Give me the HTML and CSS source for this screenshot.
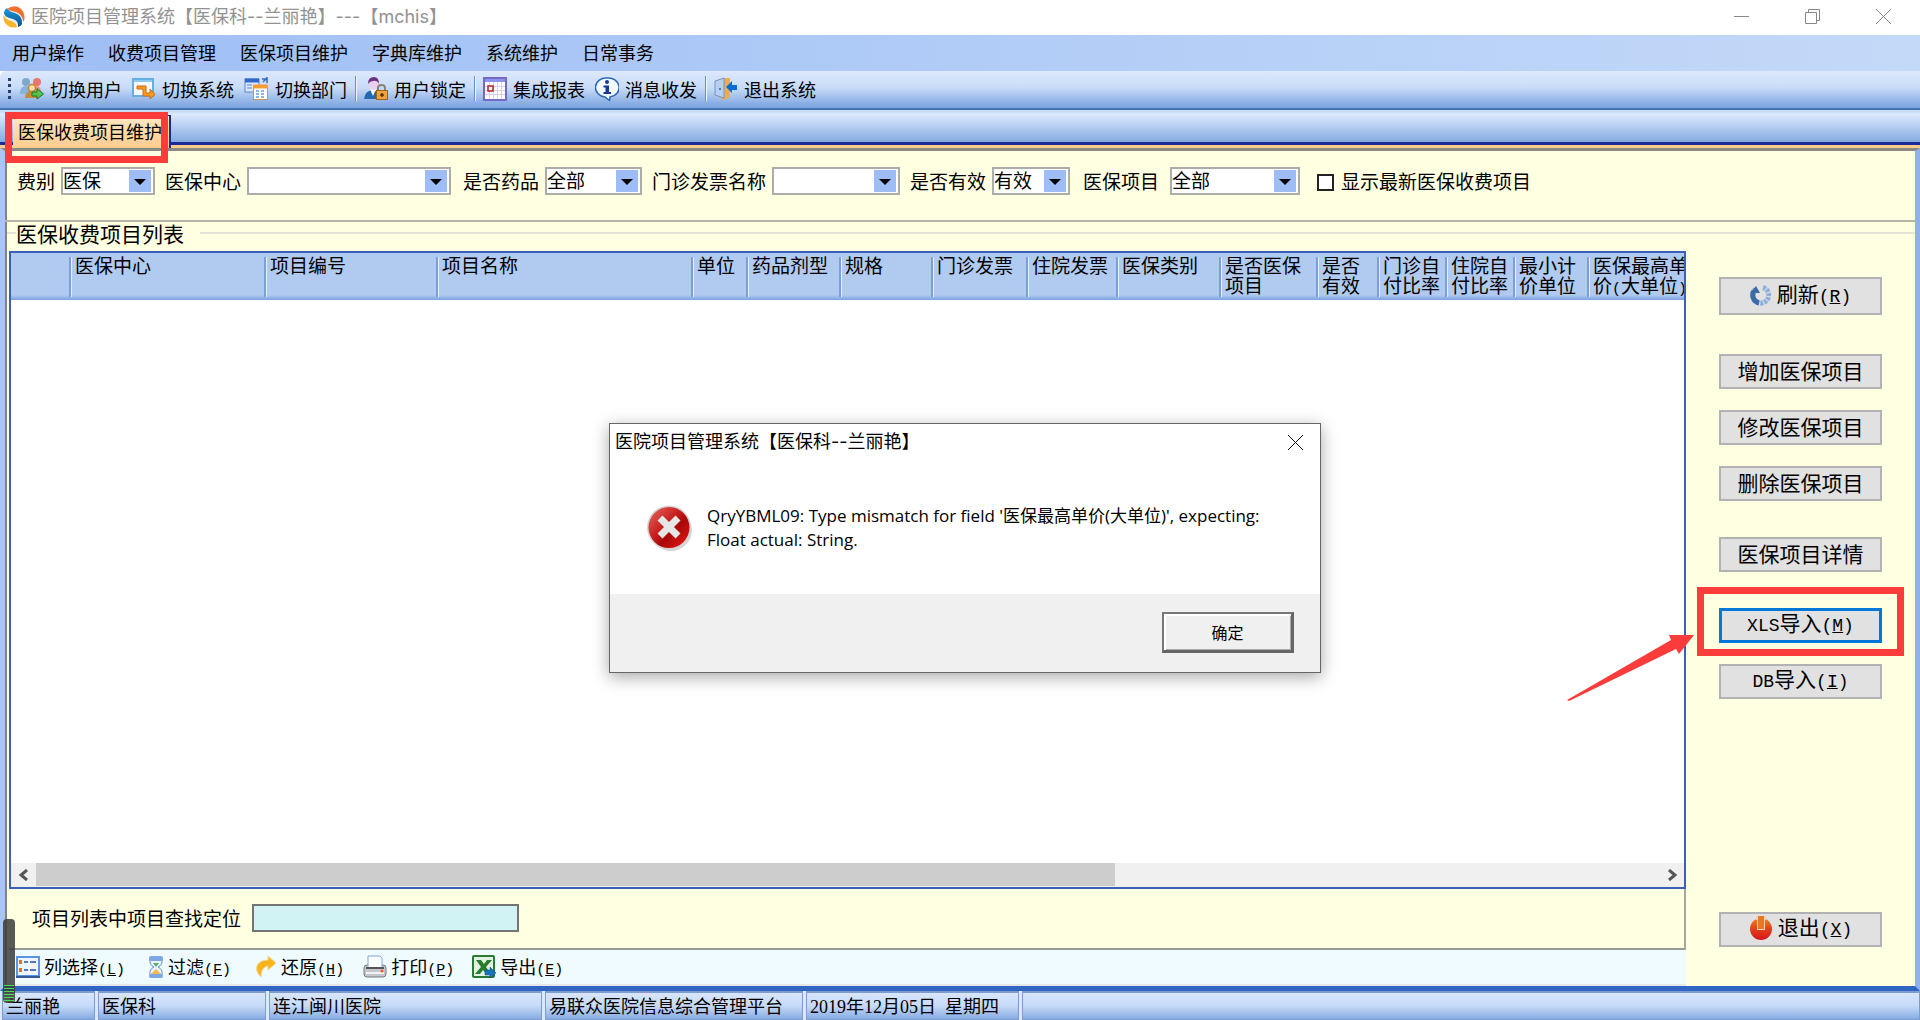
FILE: index.html
```html
<!DOCTYPE html>
<html lang="zh-CN">
<head>
<meta charset="utf-8">
<title>医院项目管理系统</title>
<link rel="stylesheet" href="styles.css">
</head>
<body>
<header class="titlebar">
  <svg class="logo" viewBox="0 0 22 22" width="22" height="22"><defs><linearGradient id="lb" x1="0" y1="0" x2="0" y2="1"><stop offset="0" stop-color="#1d9be0"/><stop offset="1" stop-color="#0b4d85"/></linearGradient></defs><circle cx="11" cy="11" r="10" fill="#e8eff4"/><path d="M4 3Q11-2 17 2Q22 6 21.500 13L20 16Q20 9 13 6Q7 5 4 3Z" fill="#f0702c"/><path d="M4 2Q6 6 12 7Q20 10 19 18Q18 20 15 21Q16 15 10 13Q0 11 1 6Q2 3 4 2Z" fill="url(#lb)"/><path d="M.5 9Q3 14 8 15Q14 17 14 21Q7 23 2 17Q0 13 .5 9Z" fill="#fbb42c"/></svg>
  <h1 class="title">医院项目管理系统【医保科--兰丽艳】---【mchis】</h1>
  <div class="winctl">
    <button class="wc" aria-label="最小化"><svg width="15" height="15"><path d="M0 7.500H15" stroke="#888" fill="none"/></svg></button>
    <button class="wc" aria-label="还原"><svg width="15" height="15"><path d="M.5 3.500H11.500V14.500H.5ZM3.500 3.500V.5H14.500V11.500H11.500" stroke="#888" fill="none"/></svg></button>
    <button class="wc" aria-label="关闭"><svg width="15" height="15"><path d="M0 0L15 15M15 0L0 15" stroke="#888" fill="none"/></svg></button>
  </div>
</header>
<nav class="menu">
  <button>用户操作</button><button>收费项目管理</button><button>医保项目维护</button><button>字典库维护</button><button>系统维护</button><button>日常事务</button>
</nav>
<div class="toolbar">
  <span class="grip"></span>
  <button><svg width="24" height="24" viewBox="0 0 24 24"><circle cx="6" cy="5" r="4" fill="#7fa8cf"/><path d="M0 17Q0 9 6 9L12 10V17Z" fill="#88b3da"/><circle cx="17" cy="5" r="4" fill="#e8776c"/><path d="M11 10Q20 6 22 16H12Z" fill="#f0948a"/><path d="M5 21Q5 14 12 14T18 21Z" fill="#c98a3a"/><circle cx="12" cy="11" r="3.500" fill="#ffe0b0" stroke="#c9821c" stroke-width="1.500"/><path d="M12 15H17V11.500L23.500 17L17 22V19H12Z" fill="#5cc04d" stroke="#157a2a"/></svg>切换用户</button>
  <button><svg width="24" height="24" viewBox="0 0 24 24"><rect x="1" y="2" width="20" height="17" fill="#f5f9ff" stroke="#64b0e6" stroke-width="2"/><path d="M2 4H20" stroke="#8ccaf0" stroke-width="2"/><path d="M5 9H14V16H18V12L23 17.500L18 22V19H11V12H5Z" fill="#f89a1c" stroke="#cf6b10"/></svg>切换系统</button>
  <button><svg width="25" height="24" viewBox="0 0 25 24"><rect x="1" y="2" width="14" height="13" fill="#dce9fb" stroke="#5a82d0"/><path d="M1 3.500H15" stroke="#3468c8" stroke-width="4"/><path d="M3 8H8M3 11H8" stroke="#5a82d0"/><path d="M18 2H23M23 0V6M19 5L23 1" stroke="#3468c8" stroke-width="1.500"/><rect x="9.500" y="8.500" width="14" height="14" fill="#fff" stroke="#cf934c"/><path d="M9 9.500H24" stroke="#f59c32" stroke-width="4"/><path d="M12 14H15M17 14H20M12 17H15M17 17H20M12 20H15M17 20H20" stroke="#8ab7df" stroke-width="2"/></svg>切换部门</button>
  <span class="sep"></span>
  <button><svg width="24" height="24" viewBox="0 0 24 24"><path d="M0 22Q1 14 8 13Q15 14 16 22Z" fill="#2369ad"/><path d="M6 12L9 19L12 12Z" fill="#fff"/><ellipse cx="9.500" cy="7" rx="4.500" ry="6" fill="#ead0ee"/><path d="M4 7Q4 0 10 0Q15 0 15 7Q13 3 9 4Q6 4 4 7Z" fill="#6d327f"/><path d="M14 14V11Q14 8 17.500 8T21 11V14" fill="none" stroke="#8b8176" stroke-width="2"/><rect x="12.500" y="13.500" width="11" height="9" fill="#eca43a" stroke="#a36313"/><path d="M16 18H20M18 16V20" stroke="#4e3410" stroke-width="1.500"/></svg>用户锁定</button>
  <span class="sep"></span>
  <button><svg width="24" height="24" viewBox="0 0 24 24"><rect x="1" y="1" width="22" height="22" fill="#fff" stroke="#7569c7" stroke-width="2"/><path d="M2 3.500H22" stroke="#8d93e8" stroke-width="3"/><path d="M6.500 5V22M10.500 5V22M14.500 5V22M18.500 5V22M2 9.500H22M2 13.500H22M2 17.500H22" stroke="#d2cff3"/><rect x="5" y="9" width="5" height="5" fill="#fff" stroke="#b91c1c" stroke-width="1.500"/></svg>集成报表</button>
  <button><svg width="24" height="24" viewBox="0 0 24 24"><path d="M12 1A10.500 9.500 0 0 1 15 20L14.500 23.500L10 20A10.500 9.500 0 0 1 12 1Z" fill="#f4faff" stroke="#2869b5" stroke-width="1.500"/><circle cx="12" cy="5" r="2" fill="#123a9b"/><path d="M8.500 8.500H14V15H16V17H8.500V15H10.500V10.500H8.500Z" fill="#123a9b"/></svg>消息收发</button>
  <span class="sep"></span>
  <button><svg width="24" height="24" viewBox="0 0 24 24"><path d="M5 4L11 1H16V20L10 23L5 20Z" fill="#e8ae52"/><path d="M1 4L10 1V21L1 18Z" fill="#b5d0f0" stroke="#7f90c4"/><circle cx="6" cy="12" r="1" fill="#405799"/><path d="M12 10L18 4V8H23V13H18V16Z" fill="#0c6ad4"/></svg>退出系统</button>
</div>
<div class="tabs" role="tablist">
  <div class="tabwrap"><button class="tab" role="tab" aria-selected="true">医保收费项目维护</button><span class="mark mark-tab"></span></div>
</div>
<main class="work">
  <form class="filters">
    <label for="f1">费别</label><span class="combo c1"><select id="f1"><option>医保</option></select></span>
    <label for="f2">医保中心</label><span class="combo c2"><select id="f2"><option></option></select></span>
    <label for="f3">是否药品</label><span class="combo c3"><select id="f3"><option>全部</option></select></span>
    <label for="f4">门诊发票名称</label><span class="combo c4"><select id="f4"><option></option></select></span>
    <label for="f5">是否有效</label><span class="combo c5"><select id="f5"><option>有效</option></select></span>
    <label for="f6">医保项目</label><span class="combo c6"><select id="f6"><option>全部</option></select></span>
    <input class="check" type="checkbox" id="f7"><label for="f7">显示最新医保收费项目</label>
  </form>
  <h2 class="legend">医保收费项目列表</h2>
  <div class="content">
    <section class="left">
      <div class="grid">
        <div class="gridbody">
          <table>
            <colgroup><col class="w0"><col class="w1"><col class="w2"><col class="w3"><col class="w4"><col class="w5"><col class="w6"><col class="w7"><col class="w8"><col class="w9"><col class="w10"><col class="w11"><col class="w12"><col class="w13"><col class="w14"><col class="w15"></colgroup>
            <thead><tr><th></th><th>医保中心</th><th>项目编号</th><th>项目名称</th><th>单位</th><th>药品剂型</th><th>规格</th><th>门诊发票</th><th>住院发票</th><th>医保类别</th><th>是否医保<br>项目</th><th>是否<br>有效</th><th>门诊自<br>付比率</th><th>住院自<br>付比率</th><th>最小计<br>价单位</th><th>医保最高单<br>价<span class="half">(</span>大单位<span class="half">)</span></th></tr></thead>
          </table>
        </div>
        <div class="hscroll">
          <button aria-label="向左"><svg width="10" height="12"><path d="M8 1L2 6L8 11" fill="none" stroke="#555" stroke-width="3"/></svg></button>
          <div class="track"><div class="thumb"></div></div>
          <button aria-label="向右"><svg width="10" height="12"><path d="M2 1L8 6L2 11" fill="none" stroke="#555" stroke-width="3"/></svg></button>
        </div>
      </div>
      <div class="search"><label for="q">项目列表中项目查找定位</label><input id="q" type="text"></div>
      <div class="actions">
        <button class="a1"><svg width="24" height="24" viewBox="0 0 24 24"><rect x="1" y="2" width="22" height="19" fill="#eef5ff" stroke="#5b93e8" stroke-width="2"/><path d="M0 22H24" stroke="#365b96" stroke-width="2"/><path d="M3 7H6M3 15H6" stroke="#f26b1c" stroke-width="4"/><path d="M8 7H12M14 7H20M8 15H12M14 15H20" stroke="#5577c4" stroke-width="2"/></svg><span>列选择<span class="half">(<u>L</u>)</span></span></button>
        <button class="a2"><svg width="16" height="24" viewBox="0 0 16 24"><path d="M2 4H14Q15 10 10 12Q15 14 14 20H2Q1 14 6 12Q1 10 2 4Z" fill="#e9f1fc" stroke="#6b93d2"/><rect x="1" y="1" width="14" height="5" rx="2" fill="#7ea7e4"/><rect x="1" y="19" width="14" height="4" rx="2" fill="#7ea7e4"/><path d="M5 8H11L8 12Z" fill="#4cb36a"/><path d="M8 14L13 19H3Z" fill="#f5b84c"/></svg><span>过滤<span class="half">(<u>F</u>)</span></span></button>
        <button class="a3"><svg width="22" height="24" viewBox="0 0 22 24"><path d="M13 1L21 8L13 15V11Q6 12 6 22Q-1 15 3 9Q6 5 13 5Z" fill="#f9b41d" stroke="#f5d78d"/></svg><span>还原<span class="half">(<u>H</u>)</span></span></button>
        <button class="a4"><svg width="24" height="24" viewBox="0 0 24 24"><rect x="1" y="10" width="22" height="12" rx="3" fill="#c5c7cd" stroke="#767982"/><path d="M5 1H17L19 3V13H5Z" fill="#fafdff" stroke="#85a6dc"/><path d="M3 13H21" stroke="#555" stroke-width="2"/><path d="M3 18H21" stroke="#f2f2f2" stroke-width="2"/><circle cx="19" cy="16" r="1.500" fill="#f45b24"/></svg><span>打印<span class="half">(<u>P</u>)</span></span></button>
        <button class="a5"><svg width="24" height="24" viewBox="0 0 24 24"><rect x="1" y="1" width="21" height="21" rx="1" fill="#e2f3e3" stroke="#2a7a36" stroke-width="2"/><path d="M4 5H9L12 9L15 5H20L14 12L19 19H14L11 15L8 19H3L9 12Z" fill="#297b2e"/><path d="M13 15H18V12L24 18L18 23V20H13Z" fill="#1973b8" stroke="#0e4f80" stroke-width=".5"/></svg><span>导出<span class="half">(<u>E</u>)</span></span></button>
      </div>
    </section>
    <aside class="side">
      <button class="btn tall"><svg width="22" height="22" viewBox="0 0 22 22"><path d="M13 3.500A8 8 0 1 1 5 5.500" fill="none" stroke="#8fb0dc" stroke-width="5" stroke-dasharray="3 1"/><path d="M9 19A8 8 0 0 1 4 7" fill="none" stroke="#3a6ba5" stroke-width="5"/><path d="M0 9L6 2L10 9Z" fill="#3a6ba5"/></svg><span>刷新<span class="key">(<u>R</u>)</span></span></button>
      <div class="group"><button class="btn">增加医保项目</button><button class="btn">修改医保项目</button><button class="btn">删除医保项目</button></div>
      <button class="btn">医保项目详情</button>
      <div class="group">
        <div class="target"><button class="btn focus"><span><span class="key">XLS</span>导入<span class="key">(<u>M</u>)</span></span></button><span class="mark mark-btn"></span>
          <svg class="arrow" width="128" height="68" viewBox="0 0 128 68"><path d="M0 66L104 6L102 1L127 1L112 20L109 15L2 67Z" fill="#fc3b3b"/></svg></div>
        <button class="btn"><span><span class="key">DB</span>导入<span class="key">(<u>I</u>)</span></span></button>
      </div>
      <button class="btn exit"><svg width="24" height="24" viewBox="0 0 24 24"><defs><linearGradient id="pw" x1="0" y1="0" x2="0" y2="1"><stop offset="0" stop-color="#ee8424"/><stop offset=".5" stop-color="#e2401b"/><stop offset="1" stop-color="#d6151c"/></linearGradient></defs><circle cx="12" cy="13" r="11" fill="url(#pw)"/><path d="M7 0H17V4H16V14H8V4H7Z" fill="#f3cdbd"/><rect x="9" y="0" width="6" height="13" fill="#e8791f"/></svg><span>退出<span class="key">(<u>X</u>)</span></span></button>
    </aside>
  </div>
</main>
<footer class="status">
  <span class="s1">兰丽艳</span><span class="s2">医保科</span><span class="s3">连江闽川医院</span><span class="s4">易联众医院信息综合管理平台</span><span class="s5"><span class="date">2019</span>年<span class="date">12</span>月<span class="date">05</span>日<span class="half">&nbsp;</span>星期四</span><span class="s6"></span>
</footer>
<div class="meter"></div>
<section class="dialog" role="dialog" aria-labelledby="dt">
  <header><h2 id="dt">医院项目管理系统【医保科--兰丽艳】</h2><button class="wc" aria-label="关闭"><svg width="15" height="15"><path d="M0 0L15 15M15 0L0 15" stroke="#111" fill="none"/></svg></button></header>
  <div class="msg">
    <svg width="46" height="48" viewBox="0 0 46 48"><defs><linearGradient id="er" x1="0" y1="0" x2="1" y2="1"><stop offset="0" stop-color="#e86a62"/><stop offset=".45" stop-color="#c41a1a"/><stop offset=".6" stop-color="#a80808"/><stop offset="1" stop-color="#ee1a14"/></linearGradient></defs><ellipse cx="24" cy="26" rx="21" ry="21" fill="#999" opacity=".4"/><circle cx="22" cy="23.500" r="22" fill="#d6d2d2"/><circle cx="22" cy="23.500" r="20.500" fill="url(#er)"/><path d="M13 14L31 32M31 14L13 32" stroke="#e6e6e6" stroke-width="7"/></svg>
    <p>QryYBML09: Type mismatch for field '医保最高单价(大单位)', expecting:<br>Float actual: String.</p>
  </div>
  <div class="foot"><button class="ok">确定</button></div>
</section>
</body>
</html>
```
FILE: styles.css
```css
* { box-sizing: border-box; }
body {
  margin: 0; min-height: 100vh; display: flex; flex-direction: column; position: relative;
  background: #fff; color: #000; overflow-x: hidden;
  font: 18px/24px "Noto Sans CJK SC", sans-serif;
}
button { font: inherit; color: inherit; border: 0; background: none; padding: 0; display: flex; align-items: center; white-space: nowrap; }
svg { flex: none; display: block; }
h1, h2, p { margin: 0; font-weight: 400; }
.half { font: 15px/20px "Liberation Mono", monospace; }
.key { font: 18px/24px "Liberation Mono", monospace; }
.date { font: 18px/20px "Liberation Serif", serif; }

.titlebar { height: 35px; display: flex; align-items: center; padding: 0 22px 2px 3px; gap: 6px; }
.title { font-size: 18px; color: #929292; font-family: Inter, "Noto Sans CJK SC", sans-serif; }
.winctl { margin-left: auto; display: flex; gap: 42px; }
.wc { width: 29px; height: 29px; justify-content: center; }

.menu { height: 36px; display: flex; align-items: center; gap: 24px; padding: 0 12px 3px; background: linear-gradient(90deg, #9ebef5, #c3d9f8); }
.toolbar {
  height: 39px; display: flex; align-items: center; padding: 0 8px 2px; gap: 10px;
  background: linear-gradient(#dce9fe, #c8dcf8 45%, #7fa6e0 95%); border-bottom: 2px solid #4672b5; border-top-left-radius: 6px;
}
.toolbar button { gap: 6px; }
.grip { width: 3px; height: 22px; background: repeating-linear-gradient(#27416f 0 3px, transparent 3px 6px); margin-right: -1px; }
.sep { width: 2px; height: 25px; background: #6a8ccb; border-right: 1px solid #f1f6ff; margin: 0 -3px 0 -2px; }

.tabs { height: 38px; padding: 5px 13px 0; background: linear-gradient(#c9dcf8 0 2px, #ddeafe 4px, #85aae0 32px, #1b2a96 32px 35px, #ffcc90 35px); }
.tabwrap { position: relative; width: 158px; height: 33px; }
.tab { width: 158px; height: 33px; padding: 0 0 3px 5px; border-right: 2px solid #1b2a96; border-top: 1px solid #1b2a96; background: linear-gradient(#ffe8c4, #ffcc8c); }
.mark { position: absolute; border: 7px solid #fc3b3b; pointer-events: none; z-index: 2; }
.mark-tab { left: -8px; top: -3px; width: 163px; height: 51px; }

.work {
  flex: 1; display: flex; flex-direction: column; background: #ffffe1;
  border-top: 3px solid #8a8a84; border-bottom: 5px solid #3065c4;
  border-left: 5px solid #a9c6f3; border-right: 5px solid #8fb2ea;
  box-shadow: inset 2px 0 #84847c;
}
.filters { height: 71px; padding: 16px 12px 0; display: flex; align-items: flex-start; font-size: 19px; line-height: 28px; border-bottom: 2px solid #b4b4a8; white-space: nowrap; }
.combo { position: relative; display: block; flex: none; height: 28px; margin: 0 10px 0 6px; border: 2px solid #acaca8; background: #fff; }
.combo::before { content: ""; position: absolute; right: 2px; top: 1px; width: 22px; height: 22px; background: #9ebcf5; pointer-events: none; }
.combo::after { content: ""; position: absolute; right: 7px; top: 10px; border: 6px solid transparent; border-top-color: #000; border-bottom: 0; pointer-events: none; }
.combo select { width: 100%; height: 24px; border: 0; background: none; appearance: none; font: 19px/22px "Noto Sans CJK SC", sans-serif; padding: 0 0 3px; color: #000; display: block; }
.c1 { width: 94px; } .c2 { width: 204px; margin-right: 12px; } .c3 { width: 97px; } .c4 { width: 128px; } .c5 { width: 78px; margin-right: 13px; } .c6 { width: 130px; margin-left: 11px; }
.check { appearance: none; width: 17px; height: 17px; margin: 7px 7px 0; border: 2px solid #222; background: #fff; }
.legend { display: flex; align-items: center; gap: 16px; height: 24px; font-size: 21px; line-height: 20px; margin-left: 2px; }
.legend { padding-bottom: 3px; }
.legend::before { content: ""; width: 9px; height: 2px; background: #e2e2d6; margin-right: -16px; }
.legend::after { content: ""; flex: 1; height: 2px; background: #e2e2d6; }
.content { flex: 1; display: flex; padding-top: 5px; }
.left { flex: 1; min-width: 0; display: flex; flex-direction: column; padding-left: 4px; }
.grid { flex: 1; display: flex; flex-direction: column; border: 2px solid #3b60b8; background: #fff; min-height: 300px; }
.gridbody { flex: 1; overflow: hidden; }
table { table-layout: fixed; width: 1696px; border-collapse: collapse; }
th {
  height: 47px; padding: 2px 0 0 6px; vertical-align: top; text-align: left; font-weight: 400; font-size: 19px; line-height: 20px; white-space: nowrap;
  background: linear-gradient(90deg, #7b9ede 2px, #e6effc 2px 3px, transparent 3px) 0 4px / 100% 40px no-repeat, linear-gradient(#b0caf0 42px, #7ba2e0);
}
th:first-child { background: linear-gradient(#b0caf0 42px, #7ba2e0); }
.w0 { width: 58px; } .w1 { width: 195px; } .w2 { width: 172px; } .w3 { width: 255px; } .w4 { width: 55px; } .w5 { width: 93px; } .w6 { width: 92px; } .w7 { width: 95px; } .w8 { width: 90px; } .w9 { width: 103px; } .w10 { width: 97px; } .w11 { width: 61px; } .w12 { width: 68px; } .w13 { width: 68px; } .w14 { width: 74px; } .w15 { width: 120px; }
.hscroll { height: 24px; display: flex; background: #f0f0f0; }
.hscroll button { width: 25px; justify-content: center; }
.track { flex: 1; }
.thumb { width: 66.5%; height: 23px; background: #cdcdcd; }
.search { height: 61px; display: flex; align-items: center; gap: 11px; padding: 0 0 2px 23px; font-size: 19px; border-right: 2px solid #a8a8a0; border-bottom: 2px solid #9a9a94; }
.search input { width: 267px; height: 28px; border: 2px solid #747474; background: #d2f3f3; font: inherit; }
.actions { height: 36px; display: flex; align-items: center; background: #f0fbff; border-bottom: 2px solid #e4e8e8; }
.actions button { gap: 4px; }
.a1 { margin: 0 23px 0 7px; } .a2 { margin-right: 24px; } .a3 { margin-right: 19px; } .a4 { margin-right: 18px; }

.side { width: 229px; padding: 26px 33px 39px; display: flex; flex-direction: column; gap: 36px; font-size: 21px; }
.group { display: flex; flex-direction: column; gap: 21px; }
.btn { width: 163px; height: 35px; justify-content: center; background: #e1e1e1; border: 2px solid #b2b2b2; font-size: 21px; padding-bottom: 3px; }
.tall { height: 38px; margin-bottom: 3px; gap: 5px; }
.focus { border: 3px solid #0078d7; }
.exit { margin-top: auto; gap: 5px; }
.target { position: relative; }
.mark-btn { left: -22px; top: -21px; width: 207px; height: 69px; }
.arrow { position: absolute; left: -152px; top: 26px; }

.status { height: 29px; display: flex; gap: 3px; padding-left: 2px; background: #dbe8fd; }
.status > span { border: 1px solid #7c9cd2; border-top-width: 2px; padding-left: 3px; line-height: 24px; background: linear-gradient(#d8e6fd, #c6daf8 50%, #86abe2); white-space: nowrap; overflow: hidden; }
.s1 { width: 93px; } .s2 { width: 168px; } .s3 { width: 273px; } .s4 { width: 258px; } .s5 { width: 213px; } .s6 { flex: 1; }
.meter { position: absolute; left: 3px; bottom: 17px; width: 12px; height: 84px; border-radius: 4px; background: repeating-linear-gradient(#4be04b 0 1px, transparent 1px 3px) 1px 66px / 10px 16px no-repeat, rgba(60, 60, 60, .85); }

.dialog {
  position: absolute; left: 609px; top: 423px; width: 712px; height: 250px; display: flex; flex-direction: column;
  background: #fff; border: 1px solid #666; box-shadow: 0 4px 16px rgba(0, 0, 0, .35);
}
.dialog header { display: flex; justify-content: space-between; align-items: center; height: 38px; padding: 0 10px 2px 5px; }
.dialog h2 { font-size: 18px; line-height: 20px; padding-bottom: 1px; font-family: Inter, "Noto Sans CJK SC", sans-serif; }
.msg { flex: 1; display: flex; gap: 14px; padding: 42px 37px 0; font: 17px/24px "Open Sans", "Noto Sans CJK SC", sans-serif; white-space: nowrap; }
.foot { height: 78px; background: #f0f0f0; display: flex; justify-content: flex-end; padding: 18px 26px 0 0; }
.ok { width: 132px; height: 41px; justify-content: center; font-size: 16px; border: 2px solid #777; border-right: 3px solid #666; border-bottom: 3px solid #666; box-shadow: inset 2px 2px #fff, inset -1px -1px #aaa; background: #f0f0f0; }
```
